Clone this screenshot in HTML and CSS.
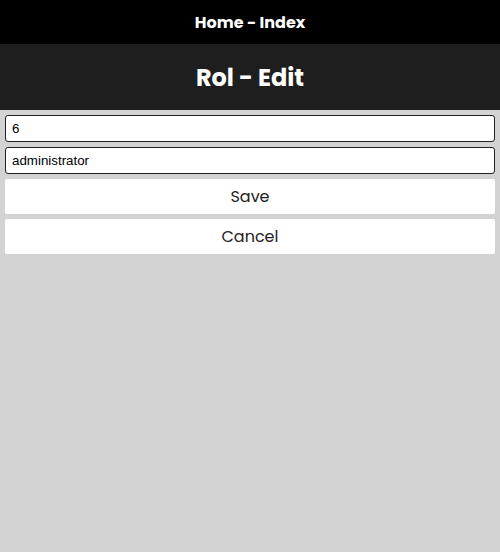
FILE: index.html
```html
<!DOCTYPE html>
<html>
<head>
<meta charset="utf-8">
<link rel="stylesheet" href="styles.css">
</head>
<body>
<header class="topbar">Home - Index</header>
<div class="titlebar"><h1 class="title">Rol - Edit</h1></div>
<form class="form">
  <input class="field" type="text" value="6">
  <input class="field" type="text" value="administrator">
  <button class="btn" type="button">Save</button>
  <button class="btn" type="button">Cancel</button>
</form>
</body>
</html>
```
FILE: styles.css
```css
html, body {
  margin: 0;
  padding: 0;
  background: #d3d3d3;
  height: 100%;
}
body {
  font-family: Poppins, "Open Sans", sans-serif;
}
.topbar {
  height: 44px;
  background: #000;
  color: #fff;
  display: flex;
  align-items: center;
  justify-content: center;
  font-weight: 700;
  font-size: 16px;
}
.titlebar {
  height: 66px;
  background: #1e1e1e;
  display: flex;
  align-items: center;
  justify-content: center;
}
.title {
  margin: 0;
  color: #fff;
  font-size: 24px;
  font-weight: 700;
}
.form {
  display: flex;
  flex-direction: column;
  gap: 5px;
  padding: 5px;
}
.field {
  box-sizing: border-box;
  height: 27px;
  margin: 0;
  border: 1px solid #222;
  border-radius: 3px;
  padding: 0 6px;
  font-family: "Liberation Sans", Arial, sans-serif;
  font-size: 13.33px;
  color: #000;
  background: #fff;
}
.btn {
  height: 35px;
  margin: 0;
  border: none;
  border-radius: 2px;
  background: #fff;
  color: #222;
  font-family: Poppins, "Open Sans", sans-serif;
  font-size: 16px;
}
```
